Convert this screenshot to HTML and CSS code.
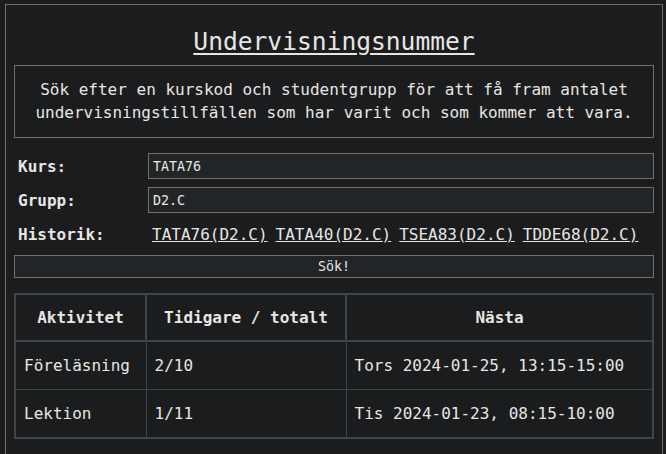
FILE: index.html
```html
<!DOCTYPE html>
<html lang="sv">
<head>
<meta charset="utf-8">
<title>Undervisningsnummer</title>
<link rel="stylesheet" href="styles.css">
</head>
<body>
<main class="page">
  <h1 class="title">Undervisningsnummer</h1>
  <p class="intro">Sök efter en kurskod och studentgrupp för att få fram antalet undervisningstillfällen som har varit och som kommer att vara.</p>
  <form class="form">
    <div class="row">
      <label class="label" for="kurs">Kurs:</label>
      <input class="field" id="kurs" type="text" value="TATA76">
    </div>
    <div class="row">
      <label class="label" for="grupp">Grupp:</label>
      <input class="field" id="grupp" type="text" value="D2.C">
    </div>
    <div class="row history">
      <span class="label">Historik:</span>
      <div class="links">
        <a href="#" class="link">TATA76(D2.C)</a>
        <a href="#" class="link">TATA40(D2.C)</a>
        <a href="#" class="link">TSEA83(D2.C)</a>
        <a href="#" class="link">TDDE68(D2.C)</a>
      </div>
    </div>
    <button class="submit" type="button">Sök!</button>
  </form>
  <table class="results">
    <colgroup>
      <col class="c1"><col class="c2"><col class="c3">
    </colgroup>
    <thead>
      <tr><th>Aktivitet</th><th>Tidigare / totalt</th><th>Nästa</th></tr>
    </thead>
    <tbody>
      <tr><td>Föreläsning</td><td>2/10</td><td>Tors 2024-01-25, 13:15-15:00</td></tr>
      <tr><td>Lektion</td><td>1/11</td><td>Tis 2024-01-23, 08:15-10:00</td></tr>
    </tbody>
  </table>
</main>
</body>
</html>
```
FILE: styles.css
```css
html, body {
  margin: 0;
  padding: 0;
  background: #1b1c1e;
  color: #e8e6e3;
  font-family: "DejaVu Sans Mono", monospace;
  font-size: 16px;
}
.page {
  margin: 4px 3px 0 5px;
  border: 1px solid #776f62;
  padding: 8px 8px 20px;
  min-height: 460px;
}
.title {
  margin: 15px 0 9px;
  text-align: center;
  font-size: 24.6px;
  font-weight: normal;
  text-decoration: underline;
  text-underline-offset: 3px;
  line-height: 28px;
}
.intro {
  margin: 0;
  border: 1px solid #776f62;
  padding: 12px 10px 13px;
  text-align: center;
  line-height: 23px;
}
.form {
  margin-top: 15px;
  display: flex;
  flex-direction: column;
  gap: 8px;
}
.row {
  display: flex;
  align-items: center;
}
.label {
  width: 134px;
  flex: none;
  padding-left: 4px;
  box-sizing: border-box;
  font-weight: bold;
}
.field {
  flex: 1;
  height: 26px;
  box-sizing: border-box;
  background: #222527;
  color: #e8e6e3;
  border: 1px solid #776f62;
  font-family: "DejaVu Sans Mono", monospace;
  font-size: 13.33px;
  padding: 1px 4px;
  margin: 0;
}
.history {
  height: 26px;
}
.links {
  display: flex;
  gap: 8px;
  padding-left: 4px;
}
.link {
  color: #e8e6e3;
  text-decoration: underline;
}
.submit {
  margin-top: 0;
  height: 23px;
  background: #222527;
  color: #e8e6e3;
  border: 1px solid #776f62;
  font-family: "DejaVu Sans Mono", monospace;
  font-size: 13.33px;
  padding: 0;
}
.results {
  margin-top: 15px;
  width: 100%;
  border-collapse: collapse;
  border: 2px solid #3f4446;
}
.c1 { width: 131px; }
.c2 { width: 200px; }
.results th {
  border: 2px solid #3f4446;
  padding: 13px 8px;
  line-height: 19px;
  text-align: center;
  font-weight: bold;
}
.results td {
  border: 1px solid #3f4446;
  padding: 14px 8px;
  line-height: 19px;
  text-align: left;
}
```
